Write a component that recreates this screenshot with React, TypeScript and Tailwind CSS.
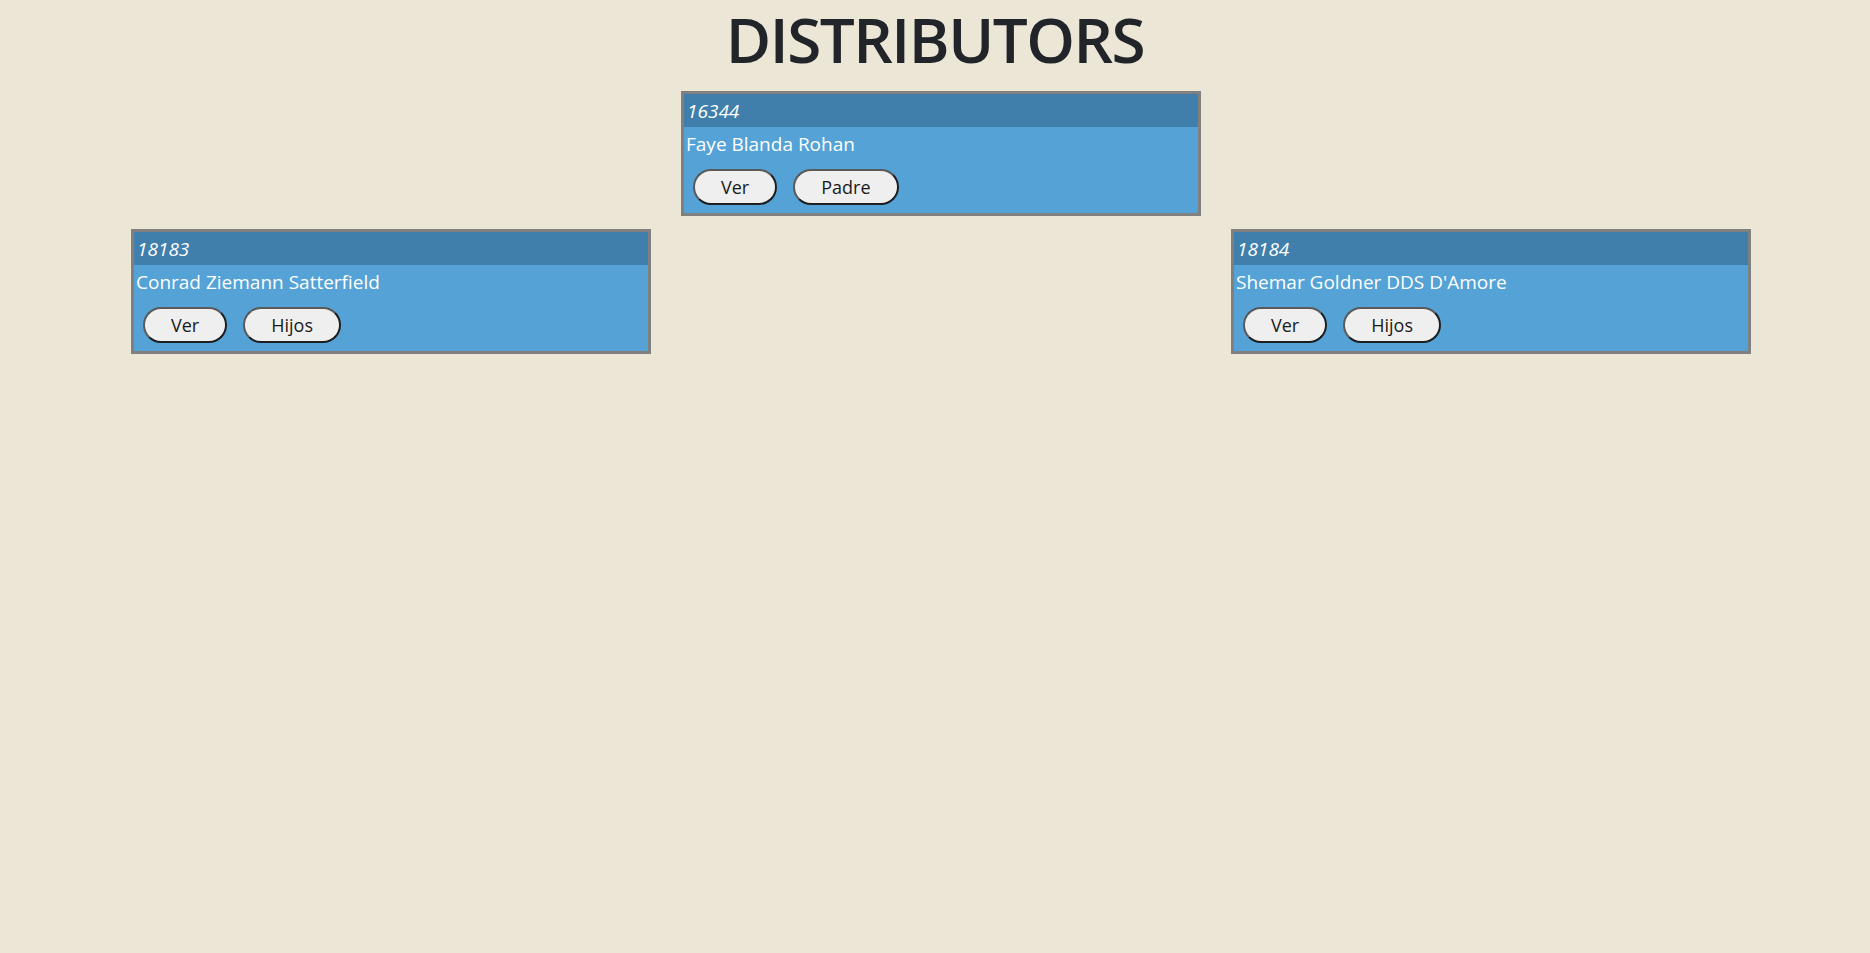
import React from 'react';

interface Distributor {
  id: number;
  name: string;
  action: string;
}

const parent: Distributor = { id: 16344, name: 'Faye Blanda Rohan', action: 'Padre' };

const children: Distributor[] = [
  { id: 18183, name: 'Conrad Ziemann Satterfield', action: 'Hijos' },
  { id: 18184, name: "Shemar Goldner DDS D'Amore", action: 'Hijos' },
];

function PillButton({ label }: { label: string }) {
  return (
    <button className="h-[36px] rounded-full border-2 border-[#5a5a5a] border-r-[#1e1e1e] border-b-[#1e1e1e] bg-[#efefef] px-[26px] text-[18px] leading-none text-[#1a1a1a]">
      {label}
    </button>
  );
}

function DistributorCard({ item }: { item: Distributor }) {
  return (
    <div className="border-[3px] border-[#808080] bg-[#54a2d6] text-white">
      <div className="h-[33px] bg-[#407fab] pl-[3px] pt-[1px] text-[19px] italic leading-[32px]">{item.id}</div>
      <div className="pl-[2px] pt-[4px] text-[19px] leading-[26px]">{item.name}</div>
      <div className="flex gap-4 pb-[8px] pl-[9px] pt-[12px]">
        <PillButton label="Ver" />
        <PillButton label={item.action} />
      </div>
    </div>
  );
}

export default function App() {
  return (
    <div className="min-h-[953px] bg-[#ece6d7] font-['Open_Sans','Noto_Sans',sans-serif]">
      <h1 className="pt-[8px] text-center text-[62px] font-semibold leading-none tracking-[-1.5px] text-[#212529]">DISTRIBUTORS</h1>
      <div className="ml-[131px] mt-[21px] grid w-[1620px] grid-cols-3 gap-x-[30px] gap-y-[13px]">
        <div className="col-start-2">
          <DistributorCard item={parent} />
        </div>
        <div className="col-start-1 row-start-2 self-start">
          <DistributorCard item={children[0]} />
        </div>
        <div className="col-start-3 row-start-2 self-start">
          <DistributorCard item={children[1]} />
        </div>
      </div>
    </div>
  );
}
